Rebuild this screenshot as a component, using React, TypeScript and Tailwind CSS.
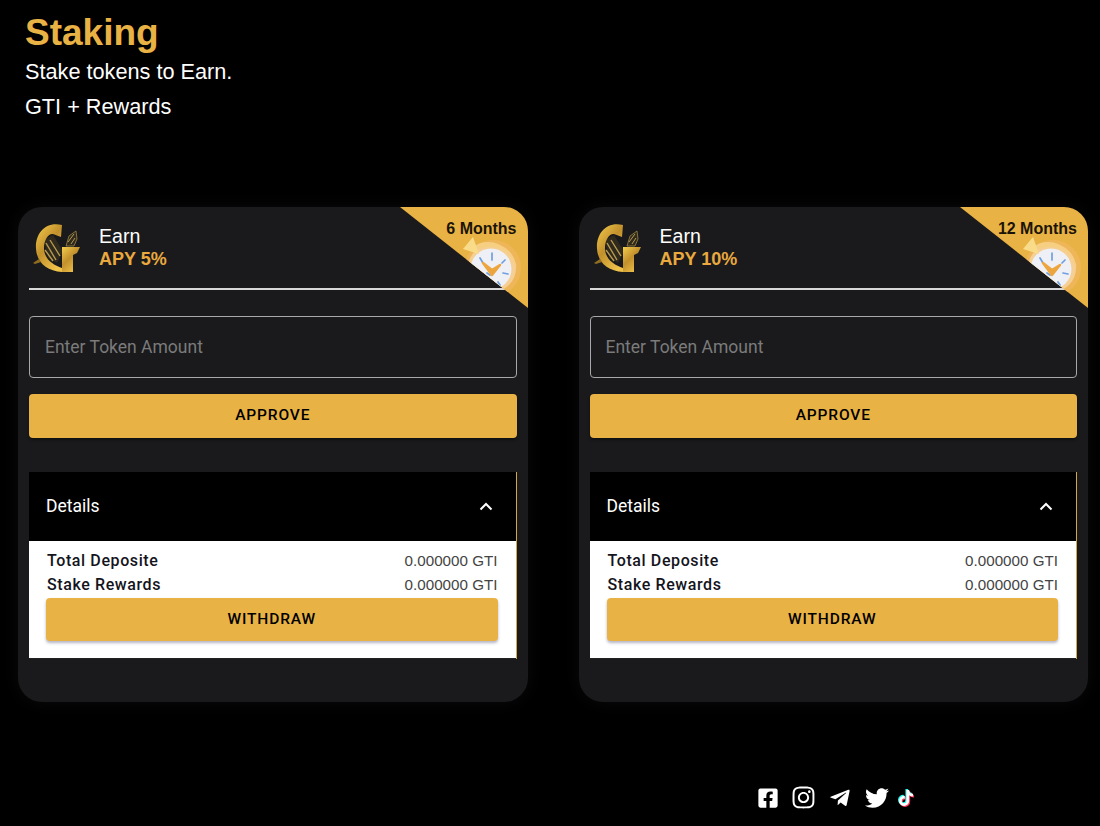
import { FaFacebookSquare, FaInstagram, FaTelegramPlane, FaTwitter, FaTiktok } from 'react-icons/fa';

function Logo({ id }: { id: string }) {
  return (
    <svg width="46" height="52" viewBox="0 0 46 52" className="shrink-0 overflow-visible">
      <defs>
        <linearGradient id={id} x1="0" y1="0" x2="0.7" y2="1">
          <stop offset="0" stopColor="#f5cd4e" />
          <stop offset="0.5" stopColor="#c2902c" />
          <stop offset="1" stopColor="#efc24a" />
        </linearGradient>
      </defs>
      {/* mask stripes inside the G */}
      <path d="M9 18l9-5 10 16-6 12-9-5z" fill="#2f2a1b" />
      <path d="M11 21l10 17M15 18l10 16M10 28l8 11" stroke="#b79a52" strokeWidth="1.4" />
      {/* G */}
      <path d="M27 3C10-1 0 12 1 27c1 14 11 22 26 23v-4C18 43 9 37 9 26c0-9 5-15 9-14l8 3z" fill={`url(#${id})`} />
      <path d="M-2 41l6-4 2 3-6 2z" fill="#8f6c22" />
      {/* T */}
      <path d="M31 24l3-10 7-5 1 8-3 7z" fill="#2f2a1b" stroke="#9f8744" strokeWidth="0.8" />
      <path d="M33 20l6-8M36 22l4-6" stroke="#b79a52" strokeWidth="1" />
      <path d="M27 25h18l-3 6-4 2v17H27V32z" fill={`url(#${id})`} />
    </svg>
  );
}

function Ribbon({ id }: { id: string }) {
  return (
    <svg width="128" height="101" viewBox="0 0 128 101" className="absolute top-0 right-0">
      <defs>
        <clipPath id={id}>
          <polygon points="0,0 128,0 128,101" />
        </clipPath>
      </defs>
      <g clipPath={`url(#${id})`}>
        <rect width="128" height="101" fill="#e9b244" />
        <circle cx="93" cy="61" r="28" fill="#eeb659" />
        <circle cx="92" cy="61" r="24" fill="#f5cf93" />
        <circle cx="91" cy="62" r="20.5" fill="#eef0f6" />
        <path d="M92 46v7M103 66l5 1M98 75l2 3M80 51l3 5M105 53l-3 3M87 66l3 2" stroke="#6f9fdc" strokeWidth="1.7" strokeLinecap="round" />
        <path d="M83 56l9 12 8-10-8 5z" fill="#eda53f" stroke="#eda53f" strokeWidth="2.5" strokeLinejoin="round" />
        <path d="M73 40c9-7 24-8 36 5 4 5 7 10 8 16-3-8-8-14-14-18-8-4-18-4-28 0z" fill="#f6cf82" />
        <path d="M63 42l10-12 6 17z" fill="#f9dc8a" />
      </g>
    </svg>
  );
}

function StakeCard({ months, apy, id }: { months: string; apy: string; id: string }) {
  return (
    <div className="relative h-[495px] overflow-hidden rounded-[24px] bg-[#1a1a1c] px-[11px] shadow-[0_0_18px_#0b0b0e]">
      <Ribbon id={`ribbon-${id}`} />
      <span className="absolute top-[12px] right-[11px] text-[16px] leading-5 font-bold text-[#1a1408] font-['Liberation_Sans',sans-serif]">
        {months}
      </span>

      <div className="flex h-[83px] items-center border-b-2 border-[#d8d8d8] pl-[6px]">
        <Logo id={`logo-${id}`} />
        <div className="ml-[18px] font-['Liberation_Sans',sans-serif]">
          <div className="text-[19.6px] leading-[22px] text-white">Earn</div>
          <div className="mt-[1px] text-[18px] leading-[22px] font-bold text-[#e9a93f]">{apy}</div>
        </div>
      </div>

      <input
        placeholder="Enter Token Amount"
        className="mt-[26px] block h-[62px] w-full rounded-[4px] border border-[#a8a8a8] bg-transparent px-[15px] text-[17.5px] text-white font-['Roboto',sans-serif] outline-none placeholder:text-[#7b7b7b]"
      />

      <button className="mt-[16px] block h-[44px] w-full rounded-[4px] bg-[#e9b244] text-[15.5px] font-medium tracking-[0.85px] text-black shadow-[0_2px_3px_rgba(0,0,0,0.4)] font-['Roboto',sans-serif]">
        APPROVE
      </button>

      <div className="mt-[34px] border-r border-[#d2a64c]">
        <div className="flex h-[69px] items-center justify-between bg-black pr-[23px] pl-[17px]">
          <span className="text-[17.5px] text-white font-['Roboto',sans-serif]">Details</span>
          <svg width="14" height="9" viewBox="0 0 14 9" fill="none">
            <path d="M1.5 7.5L7 2l5.5 5.5" stroke="white" strokeWidth="2" />
          </svg>
        </div>
        <div className="h-[118px] border-b border-[#222] bg-white pt-[8px] pr-[18px] pl-[17px]">
          <div className="flex h-[24px] items-center justify-between pl-[1px]">
            <span className="text-[16px] font-medium tracking-[0.6px] text-[#14141c] font-['Roboto',sans-serif]">Total Deposite</span>
            <span className="text-[15.2px] text-[#444] font-['Liberation_Sans',sans-serif]">0.000000 GTI</span>
          </div>
          <div className="flex h-[24px] items-center justify-between pl-[1px]">
            <span className="text-[16px] font-medium tracking-[0.6px] text-[#14141c] font-['Roboto',sans-serif]">Stake Rewards</span>
            <span className="text-[15.2px] text-[#444] font-['Liberation_Sans',sans-serif]">0.000000 GTI</span>
          </div>
          <button className="mt-[1px] block h-[43px] w-full rounded-[4px] bg-[#e9b244] text-[15.5px] font-medium tracking-[0.85px] text-black shadow-[0_2px_3px_rgba(40,40,90,0.35)] font-['Roboto',sans-serif]">
            WITHDRAW
          </button>
        </div>
      </div>
    </div>
  );
}

export default function App() {
  return (
    <div className="h-[826px] w-[1100px] overflow-hidden bg-black pt-[12px] font-['Liberation_Sans',sans-serif]">
      <div className="pl-[25px]">
        <h1 className="text-[37px] leading-[42px] font-bold text-[#e9b244]">Staking</h1>
        <p className="mt-[1px] text-[21.7px] leading-[34px] text-white">Stake tokens to Earn.</p>
        <p className="mt-[1px] text-[21.7px] leading-[34px] text-white">GTI + Rewards</p>
      </div>

      <div className="mt-[83px] grid grid-cols-[509.5px_509.5px] gap-x-[51px] pl-[18px]">
        <StakeCard months="6 Months" apy="APY 5%" id="a" />
        <StakeCard months="12 Months" apy="APY 10%" id="b" />
      </div>

      <div className="mt-[83px] flex items-center pl-[757px] text-white">
        <FaFacebookSquare className="text-[22px]" />
        <FaInstagram className="ml-[12px] text-[25px]" />
        <FaTelegramPlane className="ml-[13px] text-[22px]" />
        <FaTwitter className="ml-[14px] text-[24px]" />
        <FaTiktok className="ml-[9px] text-[16px] [filter:drop-shadow(-1px_-1px_0_#25f4ee)_drop-shadow(1px_1px_0_#fe2c55)]" />
      </div>
    </div>
  );
}
